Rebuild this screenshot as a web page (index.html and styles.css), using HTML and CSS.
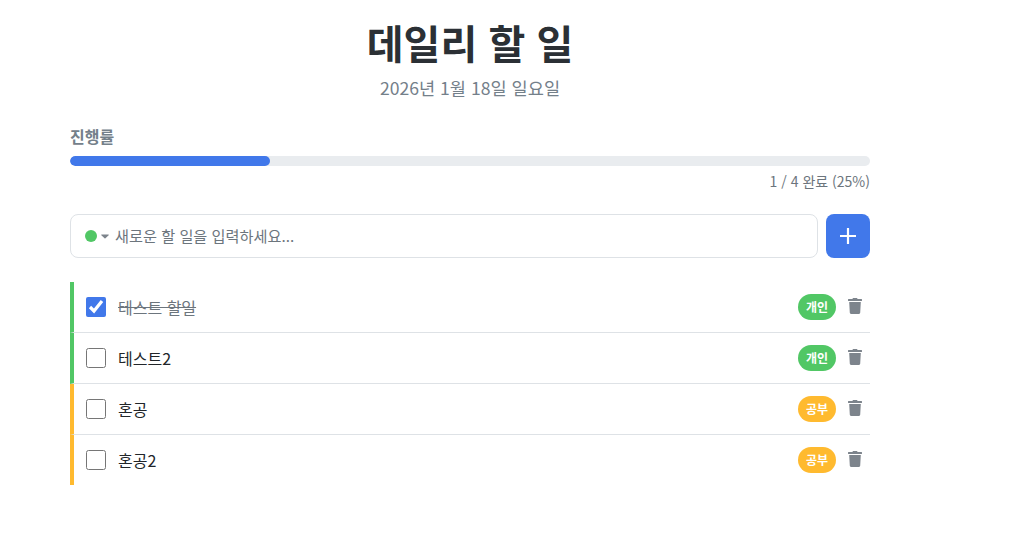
FILE: index.html
```html
<!DOCTYPE html>
<html lang="ko">
<head>
<meta charset="utf-8">
<title>데일리 할 일</title>
<link rel="stylesheet" href="styles.css">
</head>
<body>
<main class="app">
  <header class="header">
    <h1 class="title">데일리 할 일</h1>
    <p class="date">2026년 1월 18일 일요일</p>
  </header>
  <section class="progress">
    <div class="progress-label">진행률</div>
    <div class="progress-track"><div class="progress-fill"></div></div>
    <div class="progress-text">1 / 4 완료 (25%)</div>
  </section>
  <form class="add-row">
    <div class="input-box">
      <span class="dot"></span>
      <svg class="caret" width="8" height="5" viewBox="0 0 9 5"><path d="M.7.3h7.600a.5.5 0 0 1 .35.85L5 4.600a.7.7 0 0 1-1 0L.35 1.150A.5.5 0 0 1 .7.3z" fill="#7d848c"/></svg>
      <span class="placeholder">새로운 할 일을 입력하세요...</span>
    </div>
    <button class="add-btn" type="button" aria-label="추가">
      <svg width="16" height="16" viewBox="0 0 16 16"><path d="M8 0.5v15M0.5 8h15" stroke="#fff" stroke-width="2.200" stroke-linecap="round"/></svg>
    </button>
  </form>
  <ul class="list">
    <li class="item green done">
      <input class="check" type="checkbox" checked>
      <span class="text">테스트 할일</span>
      <span class="badge bg-green">개인</span>
      <svg class="trash" width="14" height="16" viewBox="0 0 14 16"><path fill="#7d848c" d="M5 0h4l.6 1H13.200a.8.8 0 0 1 0 2H.8a.8.8 0 0 1 0-2H4.400zM1.200 4h11.600l-.6 10.800A1.300 1.300 0 0 1 11 16H3a1.300 1.300 0 0 1-1.200-1.200z"/></svg>
    </li>
    <li class="item green">
      <input class="check" type="checkbox">
      <span class="text">테스트2</span>
      <span class="badge bg-green">개인</span>
      <svg class="trash" width="14" height="16" viewBox="0 0 14 16"><path fill="#7d848c" d="M5 0h4l.6 1H13.200a.8.8 0 0 1 0 2H.8a.8.8 0 0 1 0-2H4.400zM1.200 4h11.600l-.6 10.800A1.300 1.300 0 0 1 11 16H3a1.300 1.300 0 0 1-1.200-1.200z"/></svg>
    </li>
    <li class="item yellow">
      <input class="check" type="checkbox">
      <span class="text">혼공</span>
      <span class="badge bg-yellow">공부</span>
      <svg class="trash" width="14" height="16" viewBox="0 0 14 16"><path fill="#7d848c" d="M5 0h4l.6 1H13.200a.8.8 0 0 1 0 2H.8a.8.8 0 0 1 0-2H4.400zM1.200 4h11.600l-.6 10.800A1.300 1.300 0 0 1 11 16H3a1.300 1.300 0 0 1-1.200-1.200z"/></svg>
    </li>
    <li class="item yellow">
      <input class="check" type="checkbox">
      <span class="text">혼공2</span>
      <span class="badge bg-yellow">공부</span>
      <svg class="trash" width="14" height="16" viewBox="0 0 14 16"><path fill="#7d848c" d="M5 0h4l.6 1H13.200a.8.8 0 0 1 0 2H.8a.8.8 0 0 1 0-2H4.400zM1.200 4h11.600l-.6 10.800A1.300 1.300 0 0 1 11 16H3a1.300 1.300 0 0 1-1.200-1.200z"/></svg>
    </li>
  </ul>
</main>
</body>
</html>
```
FILE: styles.css
```css
* { box-sizing: border-box; }
html, body { margin: 0; padding: 0; background: #fff; }
body {
  font-family: "Noto Sans CJK KR", "Noto Sans", sans-serif;
  color: #212529;
  overflow: hidden;
}
.app { width: 800px; margin-left: 70px; }
.header { text-align: center; padding-top: 12px; }
.title { margin: 0 0 3px; font-size: 40px; line-height: 60px; font-weight: 700; color: #2b3035; }
.date { margin: 0; font-size: 17.600px; line-height: 26px; color: #74808a; }
.progress { margin-top: 24px; }
.progress-label { font-size: 16px; line-height: 23px; font-weight: 600; color: #74808a; }
.progress-track { height: 10px; margin-top: 8px; background: #e9ecef; border-radius: 5px; overflow: hidden; }
.progress-fill { width: 25%; height: 100%; background: #4178ea; border-radius: 5px; }
.progress-text { margin-top: 5px; text-align: right; font-size: 14px; line-height: 20px; color: #6c757d; }
.add-row { display: flex; gap: 8px; margin-top: 23px; }
.input-box {
  flex: 1;
  height: 44px;
  display: flex;
  align-items: center;
  padding: 0 14px;
  border: 1px solid #dee2e6;
  border-radius: 8px;
  background: #fff;
}
.dot { width: 12px; height: 12px; border-radius: 50%; background: #51c765; }
.caret { margin-left: 4px; }
.placeholder { margin: 0 0 3px 6px; font-size: 15.200px; color: #6c757d; }
.add-btn {
  width: 44px;
  height: 44px;
  padding: 0;
  display: flex;
  align-items: center;
  justify-content: center;
  border: 0;
  border-radius: 8px;
  background: #4178ea;
}
.list { list-style: none; margin: 24px 0 0; padding: 0; }
.item {
  display: flex;
  align-items: center;
  height: 51px;
  padding: 0 8px 0 12px;
  border-left: 4px solid;
  border-bottom: 1px solid #dee2e6;
}
.item:last-child { height: 50px; border-bottom: 0; }
.green { border-left-color: #51c765; }
.yellow { border-left-color: #ffba2f; }
.check { width: 20px; height: 20px; margin: 0 12px 0 0; accent-color: #4178ea; flex: none; }
.text { flex: 1; font-size: 16px; color: #212529; }
.done .text { color: #6c757d; text-decoration: line-through; }
.badge {
  height: 26px;
  padding: 0 8px 2px;
  display: flex;
  align-items: center;
  border-radius: 13px;
  font-size: 12px;
  font-weight: 700;
  color: #fff;
}
.bg-green { background: #51c765; }
.bg-yellow { background: #ffba2f; }
.trash { margin-left: 12px; flex: none; position: relative; top: -1px; }
```
